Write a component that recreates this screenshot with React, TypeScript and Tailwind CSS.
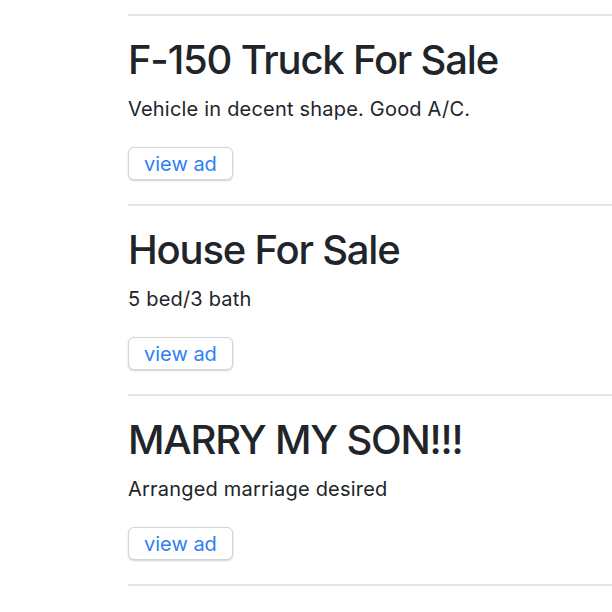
import React from 'react';

interface Ad {
  title: string;
  blurb: string;
}

const ads: Ad[] = [
  { title: 'F-150 Truck For Sale', blurb: 'Vehicle in decent shape. Good A/C.' },
  { title: 'House For Sale', blurb: '5 bed/3 bath' },
  { title: 'MARRY MY SON!!!', blurb: 'Arranged marriage desired' },
];

const App: React.FC = () => {
  return (
    <div
      className="min-h-[612px] bg-white pt-[14px] pl-[128px] text-[#212529]"
      style={{ fontFamily: 'Inter, "Noto Sans", sans-serif' }}
    >
      {ads.map((ad) => (
        <div key={ad.title} className="border-t-2 border-[#e6e6e6] pt-[20px] pb-[24px]">
          <h1 className="text-[40px] leading-[48px] font-medium tracking-[-0.03em]">{ad.title}</h1>
          <p className="mt-[10px] text-[20px] leading-[30px] tracking-[0.01em]">{ad.blurb}</p>
          <button className="mt-[23px] h-[33px] px-[15px] rounded-[6px] border border-[#d4d4d4] bg-white text-[20px] leading-none text-[#2f7ff5] shadow-[0_1px_2px_rgba(0,0,0,0.18)]">
            view ad
          </button>
        </div>
      ))}
      <div className="border-t-2 border-[#e6e6e6]" />
    </div>
  );
};

export default App;
